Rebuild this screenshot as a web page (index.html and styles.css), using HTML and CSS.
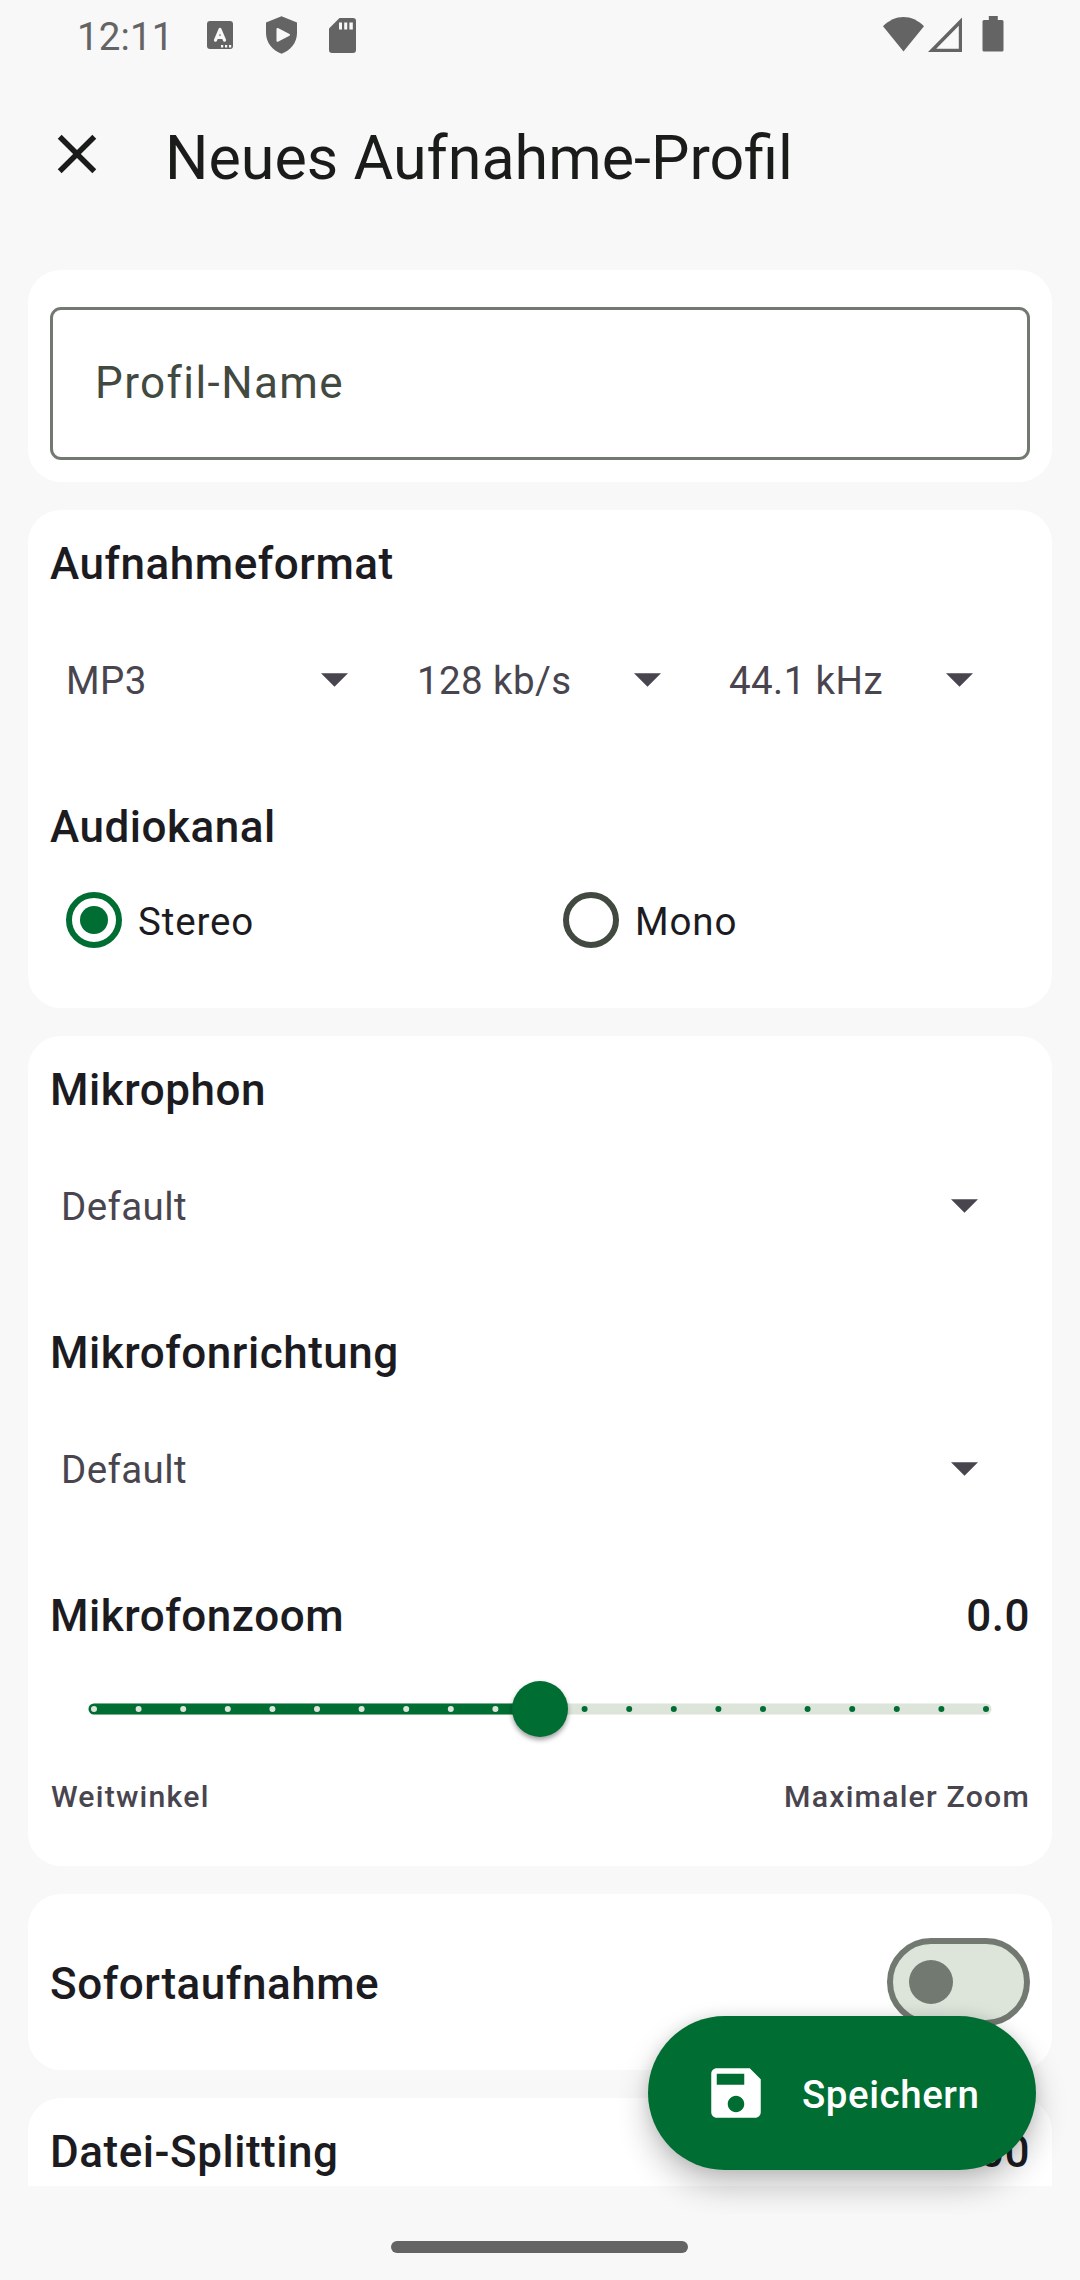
FILE: index.html
```html
<!DOCTYPE html>
<html lang="de">
<head>
<meta charset="utf-8">
<title>Neues Aufnahme-Profil</title>
<link rel="stylesheet" href="styles.css">
</head>
<body>
<div class="screen">
  <div class="status-bar">
    <span class="clock">12:11</span>
    <svg class="ic-keyboard" width="26" height="28" viewBox="0 0 26 28"><rect width="26" height="28" rx="3" fill="#646464"/><path d="M8.500 19.200 L13 8.500 L17.500 19.200 M10.200 16.300 H15.800" fill="none" stroke="#f8f8f8" stroke-width="3.200" stroke-linecap="round" stroke-linejoin="round"/><path d="M14 24h2.200v2.500h-2.200zM18 24h2.200v2.500h-2.200zM22 24h2.200v2.500h-2.200z" fill="#f8f8f8"/></svg>
    <svg class="ic-shield" width="31" height="38" viewBox="0 0 31 38"><path d="M15.500 0.300 L31 6.500 V17 C31 26.500 24.500 34.500 15.500 37.700 C6.500 34.500 0 26.500 0 17 V6.500 Z" fill="#646464"/><path d="M11.500 13 L23 18.900 L11.500 24.800 Z" fill="#f8f8f8" stroke="#f8f8f8" stroke-width="2" stroke-linejoin="round"/></svg>
    <svg class="ic-sd" width="27" height="35" viewBox="0 0 27 35"><path d="M10.500 0 H24 Q27 0 27 3 V32 Q27 35 24 35 H3 Q0 35 0 32 V10.500 Z" fill="#646464"/><path d="M10 4.500h3v7h-3zM15.200 4.500h3v7h-3zM20.400 4.500h3.400v7h-3.400z" fill="#f8f8f8"/></svg>
    <span class="spacer"></span>
    <svg class="ic-wifi" width="41" height="35" viewBox="0 0 41 35"><path d="M0 9.300 C12 -3.100 29 -3.100 41 9.300 L20.500 34.500 Z" fill="#646464"/></svg>
    <svg class="ic-signal" width="35" height="36" viewBox="0 0 35 36"><path d="M0 35 L34 0.500 V35 Z M8.200 31.800 H30.800 V8.800 Z" fill="#646464" fill-rule="evenodd"/></svg>
    <svg class="ic-battery" width="22" height="36" viewBox="0 0 22 36"><path d="M6.800 0 H15.800 V4 H20 Q21.500 4 21.500 5.500 V34 Q21.500 35.500 20 35.500 H2 Q.5 35.500 .5 34 V5.500 Q.5 4 2 4 H6.800 Z" fill="#646464"/></svg>
  </div>

  <header class="app-bar">
    <svg width="66" height="66" viewBox="0 0 24 24"><path d="M19 6.410 17.590 5 12 10.590 6.410 5 5 6.410 10.590 12 5 17.590 6.410 19 12 13.410 17.590 19 19 17.590 13.410 12z" fill="#1a1c19"/></svg>
    <h1>Neues Aufnahme-Profil</h1>
  </header>

  <main class="content">
    <section class="card name-card">
      <div class="text-field">Profil-Name</div>
    </section>

    <section class="card format-card">
      <h2>Aufnahmeformat</h2>
      <div class="select-row">
        <div class="select first"><span>MP3</span><svg width="27" height="14" viewBox="0 0 27 14"><path d="M0 .3h27L13.500 13.800z" fill="#49454f"/></svg></div>
        <div class="select"><span>128 kb/s</span><svg width="27" height="14" viewBox="0 0 27 14"><path d="M0 .3h27L13.500 13.800z" fill="#49454f"/></svg></div>
        <div class="select last"><span>44.1 kHz</span><svg width="27" height="14" viewBox="0 0 27 14"><path d="M0 .3h27L13.500 13.800z" fill="#49454f"/></svg></div>
      </div>
      <h2>Audiokanal</h2>
      <div class="radio-row">
        <div class="radio checked"><i class="ring"></i><span>Stereo</span></div>
        <div class="radio"><i class="ring"></i><span>Mono</span></div>
      </div>
    </section>

    <section class="card mic-card">
      <h2>Mikrophon</h2>
      <div class="select wide"><span>Default</span><svg width="27" height="14" viewBox="0 0 27 14"><path d="M0 .3h27L13.500 13.800z" fill="#49454f"/></svg></div>
      <h2>Mikrofonrichtung</h2>
      <div class="select wide"><span>Default</span><svg width="27" height="14" viewBox="0 0 27 14"><path d="M0 .3h27L13.500 13.800z" fill="#49454f"/></svg></div>
      <div class="title-row"><h2>Mikrofonzoom</h2><h2>0.0</h2></div>
      <div class="slider">
        <svg width="904" height="12" viewBox="0 0 904 12">
          <rect x="0.500" y="0.500" width="903" height="11" rx="5.500" fill="#dde5da"/>
          <path d="M452 .5H6a5.500 5.500 0 0 0 0 11H452z" fill="#006d33"/>
          <path d="M6 6H452" stroke="#dde5da" stroke-width="6" stroke-linecap="round" stroke-dasharray="0 44.600"/>
          <path d="M496.600 6H899" stroke="#006d33" stroke-width="6" stroke-linecap="round" stroke-dasharray="0 44.600"/>
        </svg>
        <i class="thumb"></i>
      </div>
      <div class="slider-labels"><span>Weitwinkel</span><span>Maximaler Zoom</span></div>
    </section>

    <section class="card instant-card">
      <h2>Sofortaufnahme</h2>
      <div class="switch"><i></i></div>
    </section>

    <section class="card split-card">
      <div class="title-row"><h2>Datei-Splitting</h2><h2>00</h2></div>
    </section>
  </main>

  <div class="nav-bar"><i></i></div>

  <div class="fab-layer">
    <button class="fab">
      <svg width="66" height="66" viewBox="0 0 24 24"><path d="M17 3H5c-1.110 0-2 .9-2 2v14c0 1.100.89 2 2 2h14c1.100 0 2-.9 2-2V7l-4-4zm-5 16c-1.660 0-3-1.340-3-3s1.340-3 3-3 3 1.340 3 3-1.340 3-3 3zm3-10H5V5h10v4z" fill="#fff"/></svg>
      <span>Speichern</span>
    </button>
  </div>
</div>
</body>
</html>
```
FILE: styles.css
```css
* { box-sizing: border-box; margin: 0; padding: 0; }
body { background: #f8f8f8; font-family: Roboto, "Noto Sans", sans-serif; color: #1c1b1f; }
svg { display: block; flex: none; }
i { display: block; }

.screen { position: relative; width: 1080px; height: 2280px; display: flex; flex-direction: column; overflow: hidden; }

.status-bar { height: 66px; flex: none; display: flex; align-items: flex-start; padding: 0 76px 0 77px; color: #646464; }
.clock { width: 130px; font-size: 38.5px; line-height: 74px; letter-spacing: .15px; }
.ic-keyboard { margin-top: 21px; }
.ic-shield { margin: 16px 0 0 33px; }
.ic-sd { margin: 18px 0 0 32px; }
.spacer { flex: 1; }
.ic-wifi { margin-top: 17px; }
.ic-signal { margin: 17px 0 0 4px; }
.ic-battery { margin: 16px 0 0 19px; }

.app-bar { height: 176px; flex: none; display: flex; align-items: center; padding: 0 44px; }
.app-bar h1 { margin: 7px 0 0 55px; font-size: 61px; line-height: 76px; font-weight: 400; color: #1a1c19; }

.content { height: 1944px; flex: none; overflow: hidden; display: flex; flex-direction: column; gap: 28px; padding: 28px 28px 0; }
.card { flex: none; background: #fff; border-radius: 33px; padding: 22px; }
h2 { font-size: 44px; line-height: 64px; font-weight: 500; letter-spacing: .53px; }

.name-card { height: 212px; padding-top: 37px; }
.text-field { height: 153px; border: 3px solid #727971; border-radius: 11px; padding: 0 42px; font-size: 44px; line-height: 146px; letter-spacing: 1.42px; color: #424940; }

.format-card { height: 498px; }
.select-row { display: grid; grid-template-columns: 353px 313px 314px; }
.select { height: 170px; margin-bottom: 29px; display: flex; align-items: center; justify-content: space-between; padding: 0 55px 0 14px; font-size: 38.5px; line-height: 46px; letter-spacing: .4px; color: #49454f; }
.select svg { margin-bottom: 2px; }
.select.first { padding-left: 16px; }
.select.last { padding: 0 57px 0 13px; }
.select.wide { padding: 0 52px 0 11px; }

.radio-row { height: 122px; display: grid; grid-template-columns: 497px 1fr; align-items: center; padding-left: 16px; }
.radio { display: flex; align-items: center; gap: 16px; font-size: 38.5px; line-height: 46px; letter-spacing: .85px; }
.radio span { padding-top: 4px; }
.ring { width: 56px; height: 56px; border: 6px solid #424940; border-radius: 50%; display: grid; place-items: center; }
.checked .ring { border-color: #006d33; }
.checked .ring::after { content: ""; width: 28px; height: 28px; border-radius: 50%; background: #006d33; }

.mic-card { height: 830px; }
.title-row { display: flex; justify-content: space-between; }
.slider { height: 122px; display: grid; place-items: center; }
.slider > * { grid-area: 1 / 1; }
.thumb { width: 56px; height: 56px; border-radius: 50%; background: #006d33; box-shadow: 0 3px 5px rgba(0, 0, 0, .38); }
.slider-labels { display: flex; justify-content: space-between; font-size: 30.25px; line-height: 53px; font-weight: 500; letter-spacing: 1.2px; color: #49454f; }
.slider-labels span:first-child { padding-left: 1px; }

.instant-card { height: 176px; display: flex; align-items: center; justify-content: space-between; }
.instant-card h2 { padding-top: 4px; }
.switch { width: 143px; height: 88px; border: 6px solid #727971; border-radius: 44px; background: #dde5da; display: flex; align-items: center; padding-left: 16px; }
.switch i { width: 44px; height: 44px; border-radius: 50%; background: #727971; }

.split-card { height: 300px; }

.nav-bar { flex: 1; display: flex; justify-content: center; align-items: flex-start; padding: 55px 1px 0 0; }
.nav-bar i { width: 297px; height: 12px; border-radius: 6px; background: #646464; }

/* The button floats above the list; its shadow ends at the navigation inset. */
.fab-layer { position: absolute; inset: 0 0 66px 0; overflow: hidden; display: flex; align-items: flex-end; justify-content: flex-end; padding: 0 44px 44px 0; pointer-events: none; }
.fab { width: 388px; height: 154px; border: 0; border-radius: 77px; background: #006d33; color: #fff; display: flex; align-items: center; gap: 33px; padding: 0 0 0 55px; font: 500 38.5px/46px Roboto, sans-serif; letter-spacing: .55px; box-shadow: 0 16px 32px rgba(0, 0, 0, .24), 0 0 14px rgba(0, 0, 0, .1); }
.fab span { padding-top: 4px; }
```
